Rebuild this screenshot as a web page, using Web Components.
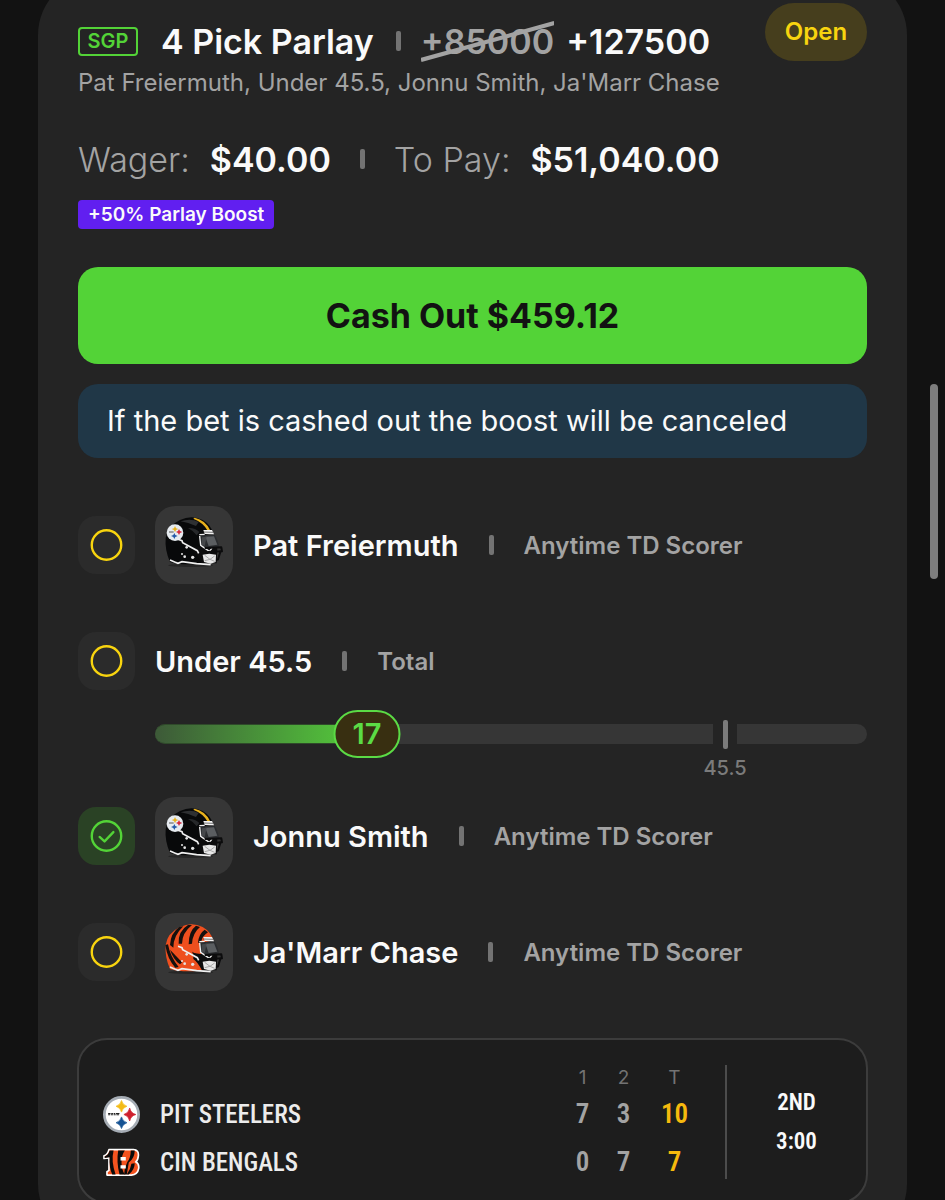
<!DOCTYPE html>
<html lang="en">
<head>
<meta charset="utf-8">
<meta name="viewport" content="width=device-width, initial-scale=1">
<title>4 Pick Parlay</title>
<style>
  html {
    background: #121212;
  }
  body {
    margin: 0;
    height: 100vh;
    overflow: hidden;
    color: #fafafa;
    font-family: Inter, "Liberation Sans", sans-serif;
  }
</style>
</head>
<body>
<bet-card>
  <bet-header slot="header" tag="SGP" name="4 Pick Parlay" was="+85000" odds="+127500" status="Open">
    Pat Freiermuth, Under 45.5, Jonnu Smith, Ja'Marr Chase
  </bet-header>
  <bet-stakes slot="stakes" wager="$40.00" pays="$51,040.00">+50% Parlay Boost</bet-stakes>
  <cash-out slot="cashout" amount="$459.12">If the bet is cashed out the boost will be canceled</cash-out>

  <bet-pick name="Pat Freiermuth" market="Anytime TD Scorer"><team-helmet team="pit"></team-helmet></bet-pick>
  <bet-pick name="Under 45.5" market="Total"></bet-pick>
  <total-progress value="17" line="45.5"></total-progress>
  <bet-pick name="Jonnu Smith" market="Anytime TD Scorer" state="won"><team-helmet team="pit"></team-helmet></bet-pick>
  <bet-pick name="Ja'Marr Chase" market="Anytime TD Scorer"><team-helmet team="cin"></team-helmet></bet-pick>

  <score-board slot="score"></score-board>
</bet-card>
<scroll-thumb></scroll-thumb>

<script>
// attach an open shadow root and fill it
function render(el, html) {
  el.attachShadow({ mode: 'open' }).innerHTML = html;
}

class BetCard extends HTMLElement {
  connectedCallback() {
    render(this, `
      <style>
        :host {
          display: block;
          box-sizing: border-box;
          margin: -25px 38px 0;
          padding: 28px 40px 40px;
          background: #242424;
          border-radius: 60px;
        }
        .picks {
          display: flex;
          flex-direction: column;
          margin: 48px 0 47px;
        }
      </style>
      <slot name="header"></slot>
      <slot name="stakes"></slot>
      <slot name="cashout"></slot>
      <section class="picks"><slot></slot></section>
      <slot name="score"></slot>
    `);
  }
}
customElements.define('bet-card', BetCard);

class BarSeparator extends HTMLElement {
  connectedCallback() {
    render(this, `
      <style>
        :host {
          display: block;
          flex: none;
          width: 5px;
          height: 20px;
          border-radius: 2px;
          background: #737373;
        }
      </style>
    `);
  }
}
customElements.define('bar-separator', BarSeparator);

class BetHeader extends HTMLElement {
  connectedCallback() {
    const get = (n) => this.getAttribute(n);
    render(this, `
      <style>
        :host {
          display: flex;
          align-items: flex-start;
          justify-content: space-between;
        }
        .text {
          padding-top: 18px;
        }
        .title {
          display: flex;
          align-items: center;
          height: 40px;
          font-size: 34px;
          font-weight: 600;
          white-space: nowrap;
        }
        .tag {
          box-sizing: border-box;
          width: 60px;
          border: 2px solid #53d337;
          border-radius: 4px;
          color: #53d337;
          font-size: 20px;
          line-height: 25px;
          text-align: center;
        }
        h1 {
          margin: 0 22px 0 23px;
          font-size: inherit;
          font-weight: inherit;
        }
        s {
          position: relative;
          margin: 0 12px 0 20px;
          color: #a3a3a3;
          text-decoration: none;
        }
        s svg {
          position: absolute;
          left: 0;
          top: 0;
          width: 100%;
          height: 100%;
        }
        p {
          margin: 6px 0 0;
          color: #a3a3a3;
          font-size: 24px;
          line-height: 32px;
        }
        .status {
          width: 102px;
          border-radius: 29px;
          background: #463e1d;
          color: #f8d40f;
          font-size: 24px;
          font-weight: 600;
          line-height: 58px;
          text-align: center;
        }
      </style>
      <div class="text">
        <div class="title">
          <span class="tag">${get('tag')}</span>
          <h1>${get('name')}</h1>
          <bar-separator></bar-separator>
          <s>${get('was')}<svg viewBox="0 0 130 40" preserveAspectRatio="none"><path d="M0 38L130 2" stroke="#a3a3a3" stroke-width="4"/></svg></s>
          <span>${get('odds')}</span>
        </div>
        <p><slot></slot></p>
      </div>
      <span class="status">${get('status')}</span>
    `);
  }
}
customElements.define('bet-header', BetHeader);

class BetStakes extends HTMLElement {
  connectedCallback() {
    render(this, `
      <style>
        :host {
          display: block;
          margin-top: 40px;
        }
        .row {
          display: flex;
          align-items: center;
          height: 40px;
          font-size: 34px;
          white-space: nowrap;
        }
        span {
          margin-right: 20px;
          color: #a3a3a3;
          font-weight: 300;
        }
        b {
          font-weight: 600;
        }
        bar-separator {
          margin: 0 29px;
        }
        .boost {
          display: inline-block;
          margin-top: 21px;
          padding: 0 10px;
          border-radius: 4px;
          background: #611ff0;
          font-size: 19px;
          font-weight: 600;
          line-height: 29px;
          vertical-align: top;
        }
      </style>
      <div class="row">
        <span>Wager:</span><b>${this.getAttribute('wager')}</b>
        <bar-separator></bar-separator>
        <span>To Pay:</span><b>${this.getAttribute('pays')}</b>
      </div>
      <div class="boost"><slot></slot></div>
    `);
  }
}
customElements.define('bet-stakes', BetStakes);

class CashOut extends HTMLElement {
  connectedCallback() {
    render(this, `
      <style>
        :host {
          display: block;
          margin-top: 38px;
        }
        button {
          display: block;
          width: 100%;
          height: 97px;
          border: 0;
          border-radius: 20px;
          background: #53d337;
          color: #121212;
          font: 700 34px Inter, "Liberation Sans", sans-serif;
          cursor: pointer;
        }
        p {
          margin: 20px 0 0;
          padding: 0 29px;
          border-radius: 20px;
          background: #203747;
          font-size: 29px;
          line-height: 74px;
        }
      </style>
      <button type="button">Cash Out ${this.getAttribute('amount')}</button>
      <p><slot></slot></p>
    `);
  }
}
customElements.define('cash-out', CashOut);

class BetPick extends HTMLElement {
  connectedCallback() {
    const won = this.getAttribute('state') === 'won';
    render(this, `
      <style>
        :host {
          display: flex;
          align-items: center;
          gap: 20px;
          height: 78px;
          white-space: nowrap;
        }
        :host(:not(:first-of-type)) {
          margin-top: 38px;
        }
        .state {
          flex: none;
          display: block;
          width: 57px;
          height: 58px;
          border-radius: 18px;
          background: #2b2b2b;
        }
        .won {
          background: #2a4225;
        }
        .name {
          font-size: 29px;
          font-weight: 600;
        }
        bar-separator {
          margin: 0 10px;
        }
        .market {
          color: #a3a3a3;
          font-size: 24px;
          font-weight: 600;
        }
      </style>
      <svg class="state ${won ? 'won' : ''}" viewBox="0 0 58 58" fill="none" stroke-width="2.4">
        <circle cx="29" cy="29" r="15" stroke="${won ? '#53d337' : '#f8d40f'}"/>
        ${won ? '<path d="M22 30l5 4.500l9-9.500" stroke="#53d337" stroke-linecap="round" stroke-linejoin="round"/>' : ''}
      </svg>
      <slot></slot>
      <span class="name">${this.getAttribute('name')}</span>
      <bar-separator></bar-separator>
      <span class="market">${this.getAttribute('market')}</span>
    `);
  }
}
customElements.define('bet-pick', BetPick);

const shells = {
  pit: {
    color: '#08090a',
    detail: `
      <path d="M62 34Q92 24 116 36L108 48Q84 38 62 34Z" fill="#2e3032"/>
      <path d="M84 54Q104 52 118 66L110 76Q100 62 84 54Z" fill="#26282a"/>
      <path d="M104 23Q136 30 150 60L142 61Q130 38 100 26Z" fill="#e9b11d"/>
      <circle cx="45" cy="68" r="25" fill="#e6ebf0"/>
      <path d="M45 48l3 7 7 2-7 3-3 7-3-7-7-3 7-2z" fill="#e9b11d"/>
      <path d="M57 57l3 6 7 3-7 3-3 6-3-6-6-3 6-3z" fill="#d4283c"/>
      <path d="M43 69l3 6 7 3-7 3-3 6-3-6-7-3 7-3z" fill="#2459a8"/>
      <path d="M27 66h14" stroke="#555" stroke-width="3"/>`
  },
  cin: {
    color: '#ee4f1e',
    detail: `
      <g fill="#15100e">
        <path d="M58 30Q32 48 30 84L40 92Q40 56 70 28Z"/>
        <path d="M84 24Q54 42 56 80L66 80Q66 48 96 24Z"/>
        <path d="M108 26Q86 42 86 82L96 80Q98 48 120 30Z"/>
        <path d="M134 38Q116 50 114 78L124 74Q126 58 144 46Z"/>
        <path d="M16 84Q22 126 46 152L56 150Q30 118 24 82Z"/>
        <path d="M30 98Q44 112 66 136L60 142Q40 128 30 98Z"/>
        <path d="M96 104L118 116L120 136Q104 126 96 104Z"/>
      </g>`
  }
};

class TeamHelmet extends HTMLElement {
  connectedCallback() {
    const shell = shells[this.getAttribute('team')];
    render(this, `
      <style>
        :host {
          display: block;
          flex: none;
          width: 78px;
          height: 78px;
          border-radius: 20px;
          background: #363636;
        }
        svg {
          display: block;
          width: 100%;
          height: 100%;
        }
      </style>
      <svg viewBox="-15 -12 234 234" aria-hidden="true">
        <ellipse cx="92" cy="166" rx="68" ry="5" fill="#262626"/>
        <path d="M30 156Q14 120 17 84Q22 48 60 30Q95 14 128 30Q152 44 160 70L122 78L124 112L140 156L100 163Q50 164 30 156Z" fill="${shell.color}"/>
        ${shell.detail}
        <path d="M100 108L128 112L172 112L170 160L126 160Q112 134 100 126Z" fill="#0c0c0d"/>
        <path d="M118 76L164 74Q174 88 177 110L150 114L122 108Z" fill="#2b2d30"/>
        <path d="M136 80L162 79L172 104L146 108Z" fill="#5b5e61"/>
        <path d="M126 82L140 80L134 108L124 104Z" fill="#46484b"/>
        <path d="M130 60L156 60L162 73L134 72Z" fill="#f2f2f2"/>
        <path d="M130 66L159 67" stroke="#333" stroke-width="2"/>
        <path d="M118 74L134 73M119 78L122 106L148 124L158 112" fill="none" stroke="#f2f2f2" stroke-width="4"/>
        <path d="M54 88L66 92L68 98L112 122L116 130" fill="none" stroke="#f0f0f0" stroke-width="5"/>
        <g fill="none" stroke="#0c0c0d" stroke-width="6" stroke-linejoin="round">
          <path d="M134 114L184 112L186 124L144 126"/>
          <path d="M182 122L174 148L160 154"/>
          <path d="M160 112L166 150"/>
        </g>
        <path d="M128 134L148 131L168 134L167 156L152 161L132 156Z" fill="#e8e8e8"/>
        <path d="M134 136L150 148L164 138M134 152L150 148L164 154" fill="none" stroke="#a8a8a8" stroke-width="3"/>
        <path d="M30 150L44 156L54 160L66 155L110 161L152 164" fill="none" stroke="#f0f0f0" stroke-width="5"/>
        <g fill="#e4e4e4">
          <circle cx="80" cy="112" r="4"/>
          <circle cx="74" cy="140" r="4"/>
          <circle cx="98" cy="142" r="5"/>
          <circle cx="66" cy="132" r="3"/>
        </g>
      </svg>
    `);
  }
}
customElements.define('team-helmet', TeamHelmet);

class TotalProgress extends HTMLElement {
  connectedCallback() {
    render(this, `
      <style>
        :host {
          display: grid;
          grid-template-columns: 558fr 24px 130fr;
          grid-template-rows: 48px 20px;
          align-items: center;
          justify-items: center;
          margin: 10px 0 -19px 77px;
        }
        .bar {
          position: relative;
          box-sizing: border-box;
          width: 100%;
          height: 20px;
          border-radius: 10px 0 0 10px;
          background: #363636;
        }
        .bar.end {
          border-radius: 0 10px 10px 0;
        }
        .fill {
          box-sizing: border-box;
          width: 38%;
          height: 100%;
          border: solid #2f4a2a;
          border-width: 1px 0;
          border-radius: inherit;
          background: linear-gradient(90deg, #3d5938, #53c53b 92%);
        }
        .value {
          position: absolute;
          left: 38%;
          top: 50%;
          transform: translate(-50%, -50%);
          box-sizing: border-box;
          width: 67px;
          border: 2px solid #5bdb45;
          border-radius: 24px;
          background: #382f11;
          color: #5bdb45;
          font-size: 29px;
          font-weight: 600;
          line-height: 44px;
          text-align: center;
        }
        .mark {
          width: 5px;
          height: 29px;
          border-radius: 2px;
          background: #7b7b7b;
        }
        .line {
          grid-column: 2;
          color: #7b7b7b;
          font-size: 20px;
          font-weight: 500;
          line-height: 24px;
        }
      </style>
      <div class="bar"><div class="fill"></div><span class="value">${this.getAttribute('value')}</span></div>
      <span class="mark"></span>
      <div class="bar end"></div>
      <span class="line">${this.getAttribute('line')}</span>
    `);
  }
}
customElements.define('total-progress', TotalProgress);

class ScoreBoard extends HTMLElement {
  connectedCallback() {
    render(this, `
      <style>
        :host {
          display: flex;
          margin: 0 -1px;
          padding: 25px 0 16px 24px;
          border: 2px solid #3c3c3c;
          border-radius: 30px;
          background: #1d1d1d;
          font-family: "Liberation Sans Narrow", "Roboto Condensed", Roboto, sans-serif;
          font-weight: 600;
        }
        table {
          flex: 1;
          border-collapse: collapse;
          table-layout: fixed;
          margin-right: 20px;
        }
        th, td {
          padding: 0;
          text-align: center;
        }
        thead th {
          height: 25px;
          color: #737373;
          font: 400 19px/25px Inter, "Liberation Sans", sans-serif;
        }
        tbody tr {
          height: 48px;
        }
        .logo {
          width: 57px;
          text-align: left;
        }
        .logo svg {
          display: block;
          width: 37px;
          height: 37px;
        }
        .team {
          text-align: left;
          color: #ececec;
          font-size: 25px;
          font-weight: 500;
        }
        td {
          color: #a3a3a3;
          font-size: 27px;
        }
        .q {
          width: 41px;
        }
        .t {
          width: 61px;
        }
        td.t {
          color: #f6b90d;
        }
        .clock {
          display: flex;
          flex-direction: column;
          justify-content: center;
          align-items: center;
          width: 139px;
          height: 114px;
          border-left: 2px solid #4c4c4c;
          font-size: 23px;
          line-height: 39px;
        }
      </style>
      <table>
        <thead>
          <tr><th class="logo"></th><th></th><th class="q">1</th><th class="q">2</th><th class="t">T</th></tr>
        </thead>
        <tbody>
          <tr>
            <td class="logo">
              <svg viewBox="0 0 108 108" aria-hidden="true">
                <circle cx="54" cy="54" r="50" fill="#fff" stroke="#a5acb4" stroke-width="8"/>
                <path d="M54 13Q57 26 70 30Q57 34 54 47Q51 34 38 30Q51 26 54 13Z" fill="#f3bb16" stroke="#f3bb16" stroke-width="2"/>
                <path d="M78 35Q81 50 96 54Q81 58 78 73Q75 58 61 54Q75 50 78 35Z" fill="#cf202e" stroke="#cf202e" stroke-width="2"/>
                <path d="M54 61Q57 74 70 78Q57 82 54 95Q51 82 38 78Q51 74 54 61Z" fill="#155293" stroke="#155293" stroke-width="2"/>
                <path d="M15 51h7m2 0h5m2 0h5m2 0h10M15 55h6m2 0h6m2 0h6m2 0h8" stroke="#222" stroke-width="3"/>
              </svg>
            </td>
            <th class="team" scope="row">PIT STEELERS</th>
            <td class="q">7</td><td class="q">3</td><td class="t">10</td>
          </tr>
          <tr>
            <td class="logo">
              <svg viewBox="0 0 112 112" aria-hidden="true">
                <path d="M18 17H92Q109 18 107 36Q106 49 99 54Q110 60 108 74Q105 93 86 94H12V84L18 80V42L3 44V36Q14 32 18 17Z" fill="#f4531f" stroke="#fff" stroke-width="5" stroke-linejoin="round"/>
                <g fill="#0b0b0b">
                  <path d="M20 20H32Q24 52 38 92H28Q18 70 20 40L5 42V38Q17 33 20 20Z"/>
                  <path d="M46 20H66Q56 34 56 56Q56 78 66 92H50Q40 56 46 20Z"/>
                  <path d="M84 20H96Q96 44 78 56L72 92H64Q64 72 74 54Q84 42 84 20Z"/>
                  <path d="M96 58Q96 78 78 92H72Q84 76 86 60Z"/>
                </g>
                <path d="M53 39H69V50H53ZM53 64H69V74H53Z" fill="#fff"/>
              </svg>
            </td>
            <th class="team" scope="row">CIN BENGALS</th>
            <td class="q">0</td><td class="q">7</td><td class="t">7</td>
          </tr>
        </tbody>
      </table>
      <div class="clock"><span>2ND</span><span>3:00</span></div>
    `);
  }
}
customElements.define('score-board', ScoreBoard);

class ScrollThumb extends HTMLElement {
  connectedCallback() {
    render(this, `
      <style>
        :host {
          position: fixed;
          top: 32%;
          right: 7px;
          width: 8px;
          height: 195px;
          border-radius: 4px;
          background: #7d7d7d;
        }
      </style>
    `);
  }
}
customElements.define('scroll-thumb', ScrollThumb);
</script>
</body>
</html>
